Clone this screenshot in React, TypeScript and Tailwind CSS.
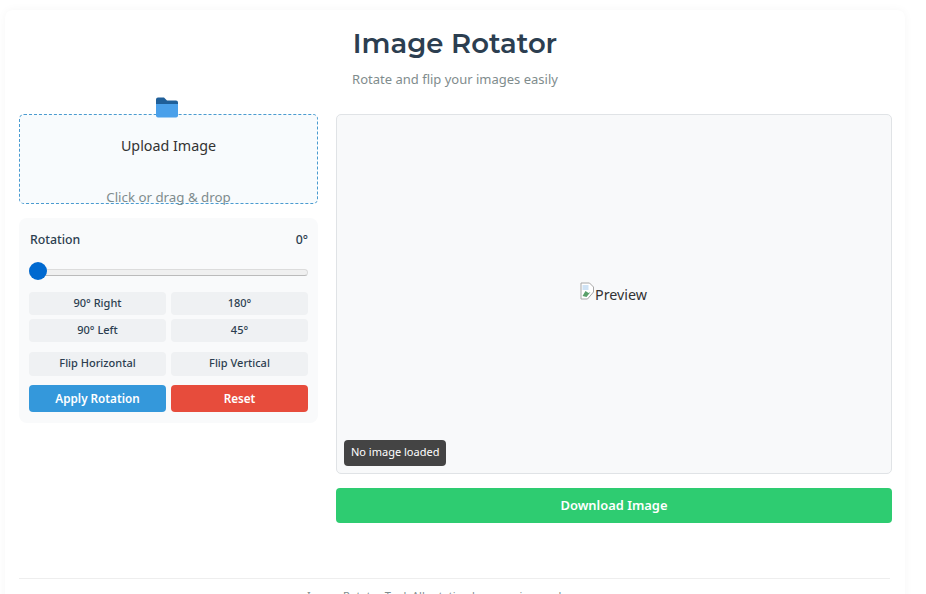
export default function App() {
  const row = "h-[23px] rounded-[4px] bg-[#eff1f3] text-[11px] font-medium text-[#2c3e50] flex items-center justify-center";
  const flip = "h-[24px] rounded-[4px] bg-[#eff1f3] pb-[1px] text-[11px] font-medium text-[#2c3e50] flex items-center justify-center";
  return (
    <div className="h-[594px] w-[926px] overflow-hidden bg-white pl-[5px] pt-[10px] font-['Noto_Sans',sans-serif] text-[#333]">
      <div className="h-[640px] w-[900px] rounded-[8px] bg-white px-[14px] pt-[14px] shadow-[0_0_10px_rgba(0,0,0,0.04)]">
        <div className="flex flex-col items-center">
          <h1 className="font-['Montserrat','Inter',sans-serif] text-[27.5px] font-semibold leading-[38px] text-[#2c3e50]">Image Rotator</h1>
          <p className="mt-[8px] text-[13px] leading-[18px] text-[#7f8c8d]">Rotate and flip your images easily</p>
        </div>
        <div className="mt-[26px] flex gap-[18px]">
          <div className="w-[299px] shrink-0">
            <div className="relative h-[90px] rounded-[5px] border border-dashed border-[#4a9bd0] bg-[#f8fbfd]">
              <svg className="absolute left-[135px] top-[-18px]" width="25" height="22" viewBox="0 0 25 22">
                <path d="M1 2.5a2 2 0 0 1 2-2h6l3 3h9a2 2 0 0 1 2 2v5H1z" fill="#1f5f99" />
                <path d="M1 7h22v11.5a2 2 0 0 1-2 2H3a2 2 0 0 1-2-2z" fill="#4aa0ea" />
              </svg>
              <p className="pt-[21px] text-center text-[14.3px] leading-[20px] text-[#333]">Upload Image</p>
              <p className="mt-[32px] text-center text-[13.3px] leading-[18px] text-[#7f8c8d]">Click or drag &amp; drop</p>
            </div>
            <div className="mt-[14px] rounded-[8px] bg-[#f9fafb] px-[10px] pb-[11px] pt-[13px]">
              <div className="flex justify-between pl-[1px] text-[12.3px] font-medium leading-[18px] text-[#2c3e50]">
                <span>Rotation</span>
                <span>0°</span>
              </div>
              <div className="relative mt-[12px] h-[20px]">
                <div className="absolute left-0 right-0 top-[8px] h-[7px] rounded-full border border-[#dcdcdc] border-b-[#bbbbbb] bg-[#f0f0f0]" />
                <div className="absolute left-0 top-[1px] h-[18px] w-[18px] rounded-full bg-[#0069d0]" />
              </div>
              <div className="mt-[11px] grid grid-cols-2 gap-x-[5px] gap-y-[4px]">
                <div className={row}>90° Right</div>
                <div className={row}>180°</div>
                <div className={row}>90° Left</div>
                <div className={row}>45°</div>
              </div>
              <div className="mt-[10px] grid grid-cols-2 gap-x-[5px]">
                <div className={flip}>Flip Horizontal</div>
                <div className={flip}>Flip Vertical</div>
              </div>
              <div className="mt-[9px] grid grid-cols-2 gap-x-[5px]">
                <div className="flex h-[27px] items-center justify-center rounded-[4px] bg-[#3498db] text-[11.7px] font-semibold text-white">Apply Rotation</div>
                <div className="flex h-[27px] items-center justify-center rounded-[4px] bg-[#e74c3c] text-[11.7px] font-semibold text-white">Reset</div>
              </div>
            </div>
          </div>
          <div className="w-[556px] shrink-0">
            <div className="relative flex h-[360px] items-center justify-center rounded-[5px] border border-[#e0e3e6] bg-[#f8f9fa]">
              <div className="flex items-start pr-[1px] pt-[2px]">
                <svg width="15" height="18" viewBox="0 0 15 18" className="mt-[-3px]">
                  <path d="M1 1h8.5l4 4v5l-6 7H1z" fill="#fff" stroke="#a8a8a8" />
                  <path d="M2.5 14l3-5 3 2 2-1-4 5z" fill="#5aa06a" />
                  <path d="M2.5 3h6v5h-6z" fill="#cfe3f5" />
                </svg>
                <span className="text-[14.3px] leading-[20px] text-[#333]">Preview</span>
              </div>
              <div className="absolute bottom-[7px] left-[7px] rounded-[4px] bg-[#444] px-[7px] pb-[7px] pt-[4px] text-[11px] leading-[15px] text-white">No image loaded</div>
            </div>
            <div className="mt-[14px] flex h-[35px] items-center justify-center rounded-[4px] bg-[#2ecc71] text-[12.9px] font-semibold text-white">Download Image</div>
          </div>
        </div>
        <div className="mt-[55px] w-[871px] border-t border-[#eeeeee] pt-[9px] text-center text-[11px] leading-[16px] text-[#7f8c8d]">
          Image Rotator Tool. All rotation happens in your browser.
        </div>
      </div>
    </div>
  );
}
